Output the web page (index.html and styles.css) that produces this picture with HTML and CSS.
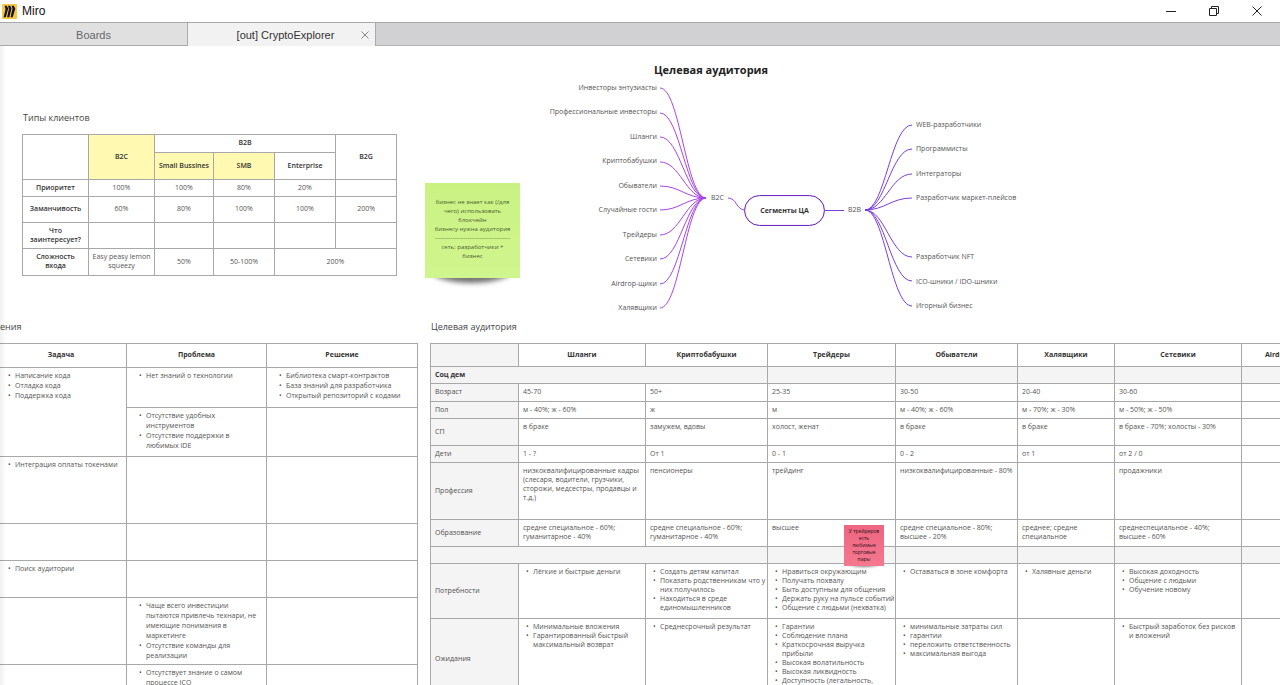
FILE: index.html
```html
<!DOCTYPE html>
<html lang="ru">
<head>
<meta charset="utf-8">
<title>Miro</title>
<link rel="stylesheet" href="styles.css">
</head>
<body>
<header class="titlebar">
  <svg class="logo" viewBox="0 0 15 15" aria-hidden="true">
    <rect width="15" height="15" rx="1" fill="#f7c93e"/>
    <path d="M2.6 1.8h2.2l1.4 2.6-2.4 8.8H1.6l1.9-7.9zM6 1.8h2.2l1.3 2.6-2.2 8.8H5.1l1.8-8.3zM9.5 1.8h2.2l1.6 2.6-2.6 8.8H8.5l2-8.8z" fill="#151226"/>
  </svg>
  <span class="app-name">Miro</span>
  <div class="controls">
    <button class="control" aria-label="Minimize"><svg viewBox="0 0 12 12"><path d="M1 6.5h10"/></svg></button>
    <button class="control" aria-label="Restore"><svg viewBox="0 0 12 12"><path d="M1.5 3.5h7v7h-7zM3.5 3.5v-2h7v7h-2"/></svg></button>
    <button class="control" aria-label="Close"><svg viewBox="0 0 12 12"><path d="M1.5 1.5l9 9M10.5 1.5l-9 9"/></svg></button>
  </div>
</header>
<nav class="tabs">
  <button class="tab">Boards</button>
  <div class="tab tab-active">
    <button class="tab-label">[out] CryptoExplorer</button>
    <button class="tab-close" aria-label="Close tab"><svg viewBox="0 0 8 8"><path d="M0.5 0.5l7 7M7.5 0.5l-7 7"/></svg></button>
  </div>
</nav>
<main class="board">
  <h1 class="board-title">Целевая аудитория</h1>

  <section class="widget clients">
    <h2 class="widget-title">Типы клиентов</h2>
    <table class="grid clients-grid">
      <colgroup><col class="w66"><col class="w66"><col class="w59"><col class="w61"><col class="w61"><col class="w61"></colgroup>
      <tr class="h18"><td rowspan="2"></td><th rowspan="2" class="mark">B2C</th><th colspan="3">B2B</th><th rowspan="2">B2G</th></tr>
      <tr class="h27"><th class="mark">Small Bussines</th><th class="mark">SMB</th><th>Enterprise</th></tr>
      <tr class="h17"><th>Приоритет</th><td>100%</td><td>100%</td><td>80%</td><td>20%</td><td></td></tr>
      <tr class="h26"><th>Заманчивость</th><td>60%</td><td>80%</td><td>100%</td><td>100%</td><td>200%</td></tr>
      <tr class="h26"><th>Что<br>заинтересует?</th><td></td><td></td><td></td><td></td><td></td></tr>
      <tr class="h27"><th>Сложность<br>входа</th><td>Easy peasy lemon squeezy</td><td>50%</td><td>50-100%</td><td colspan="2">200%</td></tr>
    </table>
  </section>

  <aside class="sticky sticky-green">
    <p>бизнес не знает как (/для чего) использовать блокчейн<br>бизнесу нужна аудитория<br>---------------------------------------<br>сеть: разработчики + бизнес</p>
  </aside>

  <section class="mindmap">
    <svg class="links" viewBox="0 0 460 236" aria-hidden="true">
      <g stroke="#a845e6">
        <path d="M106 8C126 8 132 118 152 118"/>
        <path d="M106 33C126 33 132 118 152 118"/>
        <path d="M106 57C126 57 132 118 152 118"/>
        <path d="M106 82C126 82 132 118 152 118"/>
        <path d="M106 106C126 106 132 118 152 118"/>
        <path d="M106 130C126 130 132 118 152 118"/>
        <path d="M106 155C126 155 132 118 152 118"/>
        <path d="M106 179C126 179 132 118 152 118"/>
        <path d="M106 204C126 204 132 118 152 118"/>
        <path d="M106 228C126 228 132 118 152 118"/>
        <path d="M174 118C183 118 182 130 191 130"/>
      </g>
      <g stroke="#7a3fd6">
        <path d="M271 130.5H290"/>
        <path d="M311 130C331 130 337 45 358 45"/>
        <path d="M311 130C331 130 337 69 358 69"/>
        <path d="M311 130C331 130 337 94 358 94"/>
        <path d="M311 130C331 130 337 118 358 118"/>
        <path d="M311 130C331 130 337 177 358 177"/>
        <path d="M311 130C331 130 337 201 358 201"/>
        <path d="M311 130C331 130 337 226 358 226"/>
      </g>
    </svg>
    <ul class="leaves leaves-left">
      <li>Инвесторы энтузиасты</li><li>Профессиональные инвесторы</li><li>Шланги</li><li>Криптобабушки</li><li>Обыватели</li><li>Случайные гости</li><li>Трейдеры</li><li>Сетевики</li><li>Airdrop-щики</li><li>Халявщики</li>
    </ul>
    <span class="node node-b2c">B2C</span>
    <span class="node node-root">Сегменты ЦА</span>
    <span class="node node-b2b">B2B</span>
    <ul class="leaves leaves-dev">
      <li>WEB-разработчики</li><li>Программисты</li><li>Интеграторы</li><li>Разработчик маркет-плейсов</li>
    </ul>
    <ul class="leaves leaves-biz">
      <li>Разработчик NFT</li><li>ICO-шники / IDO-шники</li><li>Игорный бизнес</li>
    </ul>
  </section>

  <section class="widget tasks">
    <h2 class="widget-title">ения</h2>
    <table class="grid tasks-grid">
      <colgroup><col class="w131"><col class="w140"><col class="w151"></colgroup>
      <tr class="h24"><th>Задача</th><th>Проблема</th><th>Решение</th></tr>
      <tr class="h40"><td rowspan="2"><ul><li>Написание кода</li><li>Отладка кода</li><li>Поддержка кода</li></ul></td><td><ul><li>Нет знаний о технологии</li></ul></td><td><ul><li>Библиотека смарт-контрактов</li><li>База знаний для разработчика</li><li>Открытый репозиторий с кодами</li></ul></td></tr>
      <tr class="h49"><td><ul><li>Отсутствие удобных инструментов</li><li>Отсутствие поддержки в любимых IDE</li></ul></td><td></td></tr>
      <tr class="h67"><td><ul><li>Интеграция оплаты токенами</li></ul></td><td></td><td></td></tr>
      <tr class="h37"><td></td><td></td><td></td></tr>
      <tr class="h37"><td><ul><li>Поиск аудитории</li></ul></td><td></td><td></td></tr>
      <tr class="h67"><td></td><td><ul><li>Чаще всего инвестиции пытаются привлечь технари, не имеющие понимания в маркетинге</li><li>Отсутствие команды для реализации</li></ul></td><td></td></tr>
      <tr class="h49"><td></td><td><ul><li>Отсутствует знание о самом процессе ICO</li></ul></td><td></td></tr>
    </table>
  </section>

  <section class="widget audience">
    <h2 class="widget-title">Целевая аудитория</h2>
    <table class="grid audience-grid">
      <colgroup><col class="w88"><col class="w127"><col class="w122"><col class="w128"><col class="w122"><col class="w97"><col class="w127"><col class="w97"></colgroup>
      <tr class="h23"><td class="shade"></td><th>Шланги</th><th>Криптобабушки</th><th>Трейдеры</th><th>Обыватели</th><th>Халявщики</th><th>Сетевики</th><th>Airdrop-щики</th></tr>
      <tr class="h17 band"><th colspan="3">Соц дем</th><td></td><td></td><td></td><td></td><td></td></tr>
      <tr class="h18"><th class="side">Возраст</th><td>45-70</td><td>50+</td><td>25-35</td><td>30-50</td><td>20-40</td><td>30-60</td><td></td></tr>
      <tr class="h17"><th class="side">Пол</th><td>м - 40%; ж - 60%</td><td>ж</td><td>м</td><td>м - 40%; ж - 60%</td><td>м - 70%; ж - 30%</td><td>м - 50%; ж - 50%</td><td></td></tr>
      <tr class="h27"><th class="side">СП</th><td>в браке</td><td>замужем, вдовы</td><td>холост, женат</td><td>в браке</td><td>в браке</td><td>в браке - 70%; холосты - 30%</td><td></td></tr>
      <tr class="h17"><th class="side">Дети</th><td>1 - ?</td><td>От 1</td><td>0 - 1</td><td>0 - 2</td><td>от 1</td><td>от 2 / 0</td><td></td></tr>
      <tr class="h57"><th class="side">Профессия</th><td>низкоквалифицированные кадры (слесаря, водители, грузчики, сторожи, медсестры, продавцы и т.д.)</td><td>пенсионеры</td><td>трейдинг</td><td>низкоквалифицированные - 80%</td><td></td><td>продажники</td><td></td></tr>
      <tr class="h27"><th class="side">Образование</th><td>средне специальное - 60%; гуманитарное - 40%</td><td>средне специальное - 60%; гуманитарное - 40%</td><td>высшее</td><td>средне специальное - 80%; высшее - 20%</td><td>среднее; средне специальное</td><td>среднеспециальное - 40%;<br>высшее - 60%</td><td></td></tr>
      <tr class="h17 band"><td colspan="3"></td><td></td><td></td><td></td><td></td><td></td></tr>
      <tr class="h55"><th class="side">Потребности</th><td><ul><li>Лёгкие и быстрые деньги</li></ul></td><td><ul><li>Создать детям капитал</li><li>Показать родственникам что у них получилось</li><li>Находиться в среде единомышленников</li></ul></td><td><ul><li>Нравиться окружающим</li><li>Получать похвалу</li><li>Быть доступным для общения</li><li>Держать руку на пульсе событий</li><li>Общение с людьми (нехватка)</li></ul></td><td><ul><li>Оставаться в зоне комфорта</li></ul></td><td><ul><li>Халявные деньги</li></ul></td><td><ul><li>Высокая доходность</li><li>Общение с людьми</li><li>Обучение новому</li></ul></td><td></td></tr>
      <tr class="h82"><th class="side">Ожидания</th><td><ul><li>Минимальные вложения</li><li>Гарантированный быстрый максимальный возврат</li></ul></td><td><ul><li>Среднесрочный результат</li></ul></td><td><ul><li>Гарантии</li><li>Соблюдение плана</li><li>Краткосрочная выручка прибыли</li><li>Высокая волатильность</li><li>Высокая ликвидность</li><li>Доступность (легальность,</li></ul></td><td><ul><li>минимальные затраты сил</li><li>гарантии</li><li>переложить ответственность</li><li>максимальная выгода</li></ul></td><td></td><td><ul><li>Быстрый заработок без рисков и вложений</li></ul></td><td></td></tr>
    </table>
  </section>

  <aside class="sticky sticky-pink">
    <p>У трейдеров есть любимые торговые пары</p>
  </aside>
</main>
</body>
</html>
```
FILE: styles.css
```css
* { box-sizing: border-box; }

body {
  margin: 0;
  height: 100vh;
  display: flex;
  flex-direction: column;
  overflow: hidden;
  background: #fff;
  color: #555;
  font-family: "Open Sans", "Noto Sans", sans-serif;
}

button {
  padding: 0;
  border: 0;
  background: none;
  color: inherit;
  font: inherit;
}

h1, h2, p, ul { margin: 0; }

/* Window frame */
.titlebar {
  display: flex;
  align-items: center;
  height: 22px;
  padding-left: 2px;
  font: 12px/20px "Liberation Sans", Arial, sans-serif;
  color: #111;
}
.logo { width: 15px; height: 15px; }
.app-name { padding-left: 5px; }
.controls { display: flex; margin-left: auto; padding-right: 2px; height: 20px; }
.control {
  display: flex;
  align-items: center;
  justify-content: center;
  width: 43px;
}
.control svg { width: 12px; height: 12px; fill: none; stroke: #222; }

.tabs {
  display: flex;
  height: 24px;
  background: #d1d0d3;
  border-top: 1px solid #a9a9ac;
  box-shadow: inset 0 -1px #b3b3b6;
  font: 11px/22px "Liberation Sans", Arial, sans-serif;
}
.tab {
  width: 188px;
  background: #e0e0e0;
  border-right: 1px solid #a9a9ac;
  box-shadow: inset 0 -1px #a9a9ac;
  color: #666;
}
.tab-active {
  display: flex;
  align-items: center;
  padding: 0 6px 0 22px;
  background: #f2f2f2;
  box-shadow: none;
  color: #333;
}
.tab-label { flex: 1; }
.tab-close { display: flex; }
.tab-close svg { width: 8px; height: 8px; fill: none; stroke: #888; }

/* Canvas: every widget has a free position */
.board {
  position: relative;
  flex: 1;
  overflow: hidden;
  font-size: 7px;
  line-height: 9px;
}
.board::after {
  content: "";
  position: absolute;
  inset: 0 auto 0 0;
  width: 6px;
  background: linear-gradient(to right, rgba(0, 0, 0, 0.06), rgba(0, 0, 0, 0));
}
.board-title {
  position: absolute;
  left: 654px;
  top: 16px;
  font-size: 11px;
  line-height: 16px;
  font-weight: 700;
  color: #222;
  white-space: nowrap;
}
.widget { position: absolute; }
.widget-title {
  padding: 0 0 10px 1px;
  font-size: 9px;
  line-height: 12px;
  font-weight: 400;
  color: #444;
}
.clients { left: 22px; top: 66px; }
.tasks { left: -5px; top: 275px; }
.tasks .widget-title { padding-left: 5px; }
.audience { left: 430px; top: 275px; }

/* Tables */
.grid {
  width: 0;
  table-layout: fixed;
  border-collapse: collapse;
  background: #fff;
}
.grid th, .grid td {
  padding: 0 0 2px;
  border: 1px solid #a8a8a8;
}
.grid th { font-weight: 700; color: #333; }
.grid ul { padding-left: 7px; list-style: none; }
.grid li { padding-left: 7px; text-indent: -7px; }
.grid li::before {
  content: "•";
  display: inline-block;
  width: 7px;
  text-indent: 0;
}

.w59 { width: 59px; }
.w61 { width: 61px; }
.w66 { width: 66px; }
.w88 { width: 88px; }
.w97 { width: 97px; }
.w122 { width: 122px; }
.w127 { width: 127px; }
.w128 { width: 128px; }
.w131 { width: 131px; }
.w140 { width: 140px; }
.w151 { width: 151px; }
.h17 { height: 17px; }
.h18 { height: 18px; }
.h23 { height: 23px; }
.h24 { height: 24px; }
.h26 { height: 26px; }
.h27 { height: 27px; }
.h37 { height: 37px; }
.h40 { height: 40px; }
.h49 { height: 49px; }
.h55 { height: 55px; }
.h57 { height: 57px; }
.h67 { height: 67px; }
.h82 { height: 82px; }

.clients-grid { text-align: center; }
.clients-grid th { font-weight: 600; white-space: nowrap; }
.clients-grid .mark { background: #fff9b1; }

.tasks-grid { line-height: 10px; }
.tasks-grid td { padding: 3px 4px 0 5px; vertical-align: top; }

.audience-grid td { padding: 3px 0 0 4px; vertical-align: top; }
.audience-grid ul { padding-left: 3px; }
.audience-grid .side, .audience-grid .band th {
  padding: 0 4px 2px;
  text-align: left;
  background: #f4f4f4;
}
.audience-grid .side { font-weight: 400; color: #505050; }
.audience-grid .band td, .audience-grid .shade { background: #f4f4f4; }

/* Mind map */
.mindmap {
  position: absolute;
  left: 554px;
  top: 34px;
  width: 460px;
  height: 236px;
  line-height: 10px;
  white-space: nowrap;
}
.links { display: block; width: 460px; height: 236px; fill: none; }
.leaves {
  position: absolute;
  display: flex;
  flex-direction: column;
  justify-content: space-between;
  padding: 0;
  list-style: none;
}
.leaves-left { left: 0; top: 3px; width: 103px; height: 230px; align-items: flex-end; }
.leaves-dev { left: 362px; top: 40px; height: 83px; }
.leaves-biz { left: 362px; top: 172px; height: 59px; }
.node { position: absolute; }
.node-b2c { left: 157px; top: 113px; }
.node-b2b { left: 294px; top: 125px; }
.node-root {
  left: 190px;
  top: 115px;
  width: 81px;
  height: 31px;
  border: 1px solid #6a2bc0;
  border-radius: 16px;
  background: #fff;
  box-shadow: inset 0 0 1px #8a50d8;
  line-height: 29px;
  font-weight: 700;
  color: #333;
  text-align: center;
}

/* Sticky notes */
.sticky {
  position: absolute;
  z-index: 0;
  display: flex;
  align-items: center;
  justify-content: center;
  text-align: center;
}
.sticky::before, .sticky::after { content: ""; position: absolute; z-index: -1; }
.sticky::before {
  inset: auto 6% 1px 4%;
  height: 30%;
  border-radius: 0 0 50% 50%;
  box-shadow: 0 6px 5px rgba(0, 0, 0, 0.55);
}
.sticky::after { inset: 0; }
.sticky-green {
  left: 425px;
  top: 137px;
  width: 95px;
  height: 95px;
  padding: 0 6px 2px;
  font-size: 6px;
  color: #4c6130;
}
.sticky-green::after { background: linear-gradient(#c9f283, #d1f58e); }
.sticky-pink {
  left: 844px;
  top: 479px;
  width: 40px;
  height: 41px;
  padding: 0 4px;
  font-size: 5px;
  line-height: 7px;
  color: #2b1015;
}
.sticky-pink::before { box-shadow: 0 2px 3px rgba(0, 0, 0, 0.5); }
.sticky-pink::after { background: linear-gradient(#ee6580, #f4788f); }
```
